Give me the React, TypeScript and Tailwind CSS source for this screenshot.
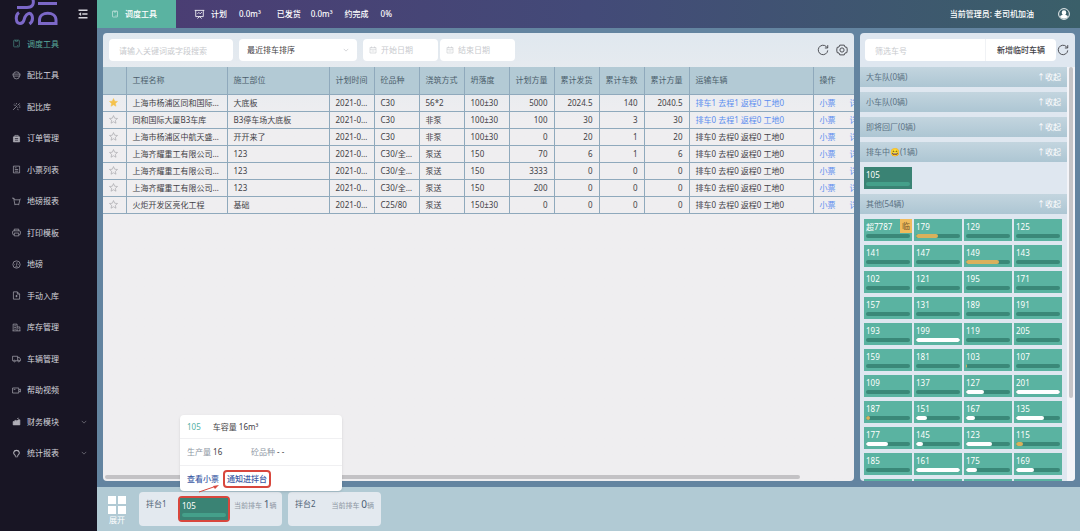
import type { ReactNode } from 'react';

const icon = {
  phone: (
    <>
      <rect x="3" y="2" width="10" height="12" rx="1" />
      <path d="M6 2v2h4V2M9 11.5h2" />
    </>
  ),
  mixer: (
    <>
      <path d="M3 5a5 3.500 0 0 1 10 0M1 5.500h14M2 9h12M3 9v1a5 4 0 0 0 10 0V9M2 5.500V9M14 5.500V9" />
    </>
  ),
  spark: (
    <>
      <path d="M7 9l-5 5M6 6l4 4M10 6l3.500-3.500M3 5l2 1M8 2v2M12 9h3M10 12l1 2.500M13 6l1.500-.5M5 3l1 1" />
    </>
  ),
  order: (
    <>
      <path fill="currentColor" d="M2.500 5h11v9h-11z" />
      <path d="M5 5V2.500h6V5" />
      <path stroke="#181524" d="M5 8h6M5 11h6" />
    </>
  ),
  list: (
    <>
      <path d="M2.500 2h11v12h-11zM5 5h3M5 8h6M5 11h6" />
    </>
  ),
  cart: (
    <>
      <path d="M0 2h3l2 3h9l-2 8H5L3 2M14 5l1-2M5 13v1.500M12 13v1.500" />
    </>
  ),
  printer: (
    <>
      <path d="M4 5V2h8v3M4 12H3a2 2 0 0 1-2-2V7a2 2 0 0 1 2-2h10a2 2 0 0 1 2 2v3a2 2 0 0 1-2 2h-1M4 9h8v5H4z" />
    </>
  ),
  gauge: (
    <>
      <circle cx="8" cy="8" r="6.500" />
      <path d="M9 4L8 10M4 8h1M11 8h1M6 12h4" />
    </>
  ),
  fileIn: (
    <>
      <path d="M2.500 1.500h7l4 4v9h-11zM9.500 1.500v4h4M8 7v4M6 9h4" />
    </>
  ),
  building: (
    <>
      <path d="M2 14V2h7v12M9 7h5v7M1 14h14M4 5h3M4 8h3M4 11h3M11 10h1" />
    </>
  ),
  truck: (
    <>
      <path d="M3 12H1V4h9v8H6M10 6h3l2 3v3h-1.500" />
      <circle cx="4.500" cy="12.500" r="1.500" />
      <circle cx="12" cy="12.500" r="1.500" />
    </>
  ),
  video: (
    <>
      <path d="M1 3.500h11v9H1zM12 7l3-1.500v5L12 9M3 6h3" />
    </>
  ),
  finance: (
    <>
      <path fill="currentColor" d="M2 8h3V6h3v2l3-3h3v9H2z" />
      <path d="M9 3l3-1" />
    </>
  ),
  bulb: (
    <>
      <path strokeWidth="2" d="M6 11.500C1 9 2.500 2.500 8 2.500S15 9 10 11.500" />
      <path d="M6 11v3h4v-3" />
    </>
  ),
};

const menu: { label: string; icon: ReactNode; active?: boolean; expandable?: boolean }[] = [
  { label: '调度工具', icon: icon.phone, active: true },
  { label: '配比工具', icon: icon.mixer },
  { label: '配比库', icon: icon.spark },
  { label: '订单管理', icon: icon.order },
  { label: '小票列表', icon: icon.list },
  { label: '地磅报表', icon: icon.cart },
  { label: '打印模板', icon: icon.printer },
  { label: '地磅', icon: icon.gauge },
  { label: '手动入库', icon: icon.fileIn },
  { label: '库存管理', icon: icon.building },
  { label: '车辆管理', icon: icon.truck },
  { label: '帮助视频', icon: icon.video },
  { label: '财务模块', icon: icon.finance, expandable: true },
  { label: '统计报表', icon: icon.bulb, expandable: true },
];

const columns = [
  { title: '', width: 'w-[23px]' },
  { title: '工程名称', width: 'w-[101px]' },
  { title: '施工部位', width: 'w-[102px]' },
  { title: '计划时间', width: 'w-[45px]' },
  { title: '砼品种', width: 'w-[45px]' },
  { title: '浇筑方式', width: 'w-[45px]' },
  { title: '坍落度', width: 'w-[45px]' },
  { title: '计划方量', width: 'w-[45px]', right: true },
  { title: '累计发货', width: 'w-[45px]', right: true },
  { title: '累计车数', width: 'w-[45px]', right: true },
  { title: '累计方量', width: 'w-[45px]', right: true },
  { title: '运输车辆', width: 'w-[124px]' },
  { title: '操作', width: 'w-auto' },
];

const rows = [
  ['上海市杨浦区同和国际…', '大底板', '2021-0…', 'C30', '56*2', '100±30', '5000', '2024.5', '140', '2040.5', '排车1 去程1 返程0 工地0'],
  ['同和国际大厦B3车库', 'B3停车场大底板', '2021-0…', 'C30', '非泵', '100±30', '100', '30', '3', '30', '排车0 去程1 返程0 工地0'],
  ['上海市杨浦区中航天盛…', '开开来了', '2021-0…', 'C30', '非泵', '100±30', '0', '20', '1', '20', '排车0 去程0 返程0 工地0'],
  ['上海齐耀重工有限公司…', '123', '2021-0…', 'C30/全…', '泵送', '150', '70', '6', '1', '6', '排车0 去程0 返程0 工地0'],
  ['上海齐耀重工有限公司…', '123', '2021-0…', 'C30/全…', '泵送', '150', '3333', '0', '0', '0', '排车0 去程0 返程0 工地0'],
  ['上海齐耀重工有限公司…', '123', '2021-0…', 'C30/全…', '泵送', '150', '200', '0', '0', '0', '排车0 去程0 返程0 工地0'],
  ['火炬开发区亮化工程', '基础', '2021-0…', 'C25/80', '泵送', '150±30', '0', '0', '0', '0', '排车0 去程0 返程0 工地0'],
];

type Truck = { no: string; load?: number; warn?: boolean; temp?: boolean };

const trucks: Truck[] = [
  { no: '超7787', temp: true }, { no: '179', load: 50, warn: true }, { no: '129' }, { no: '125' },
  { no: '141' }, { no: '147' }, { no: '149', load: 74, warn: true }, { no: '143' },
  { no: '102' }, { no: '121' }, { no: '195' }, { no: '171' },
  { no: '157' }, { no: '131' }, { no: '189' }, { no: '191' },
  { no: '193' }, { no: '199', load: 100 }, { no: '119' }, { no: '205' },
  { no: '159' }, { no: '181' }, { no: '103', load: 3, warn: true }, { no: '107' },
  { no: '109' }, { no: '137' }, { no: '127', load: 41 }, { no: '201', load: 100 },
  { no: '187', load: 10, warn: true }, { no: '151', load: 24 }, { no: '167', load: 20 }, { no: '135', load: 63 },
  { no: '177', load: 50 }, { no: '145', load: 15 }, { no: '123', load: 58 }, { no: '115', load: 17, warn: true },
  { no: '185' }, { no: '161', load: 100 }, { no: '175', load: 24 }, { no: '169', load: 41 },
  { no: '' }, { no: '' }, { no: '' }, { no: '' },
];

function Icon({ children, className }: { children: ReactNode; className: string }) {
  return (
    <svg className={className} viewBox="0 0 16 16" fill="none" stroke="currentColor" strokeWidth="1.2" aria-hidden="true">
      {children}
    </svg>
  );
}

function RefreshIcon() {
  return (
    <Icon className="size-3">
      <path d="M14.300 8.500A6.300 6.300 0 1 1 12.500 3.500L14 5M14.300 1.500V5.300H10.500" />
    </Icon>
  );
}

function TruckCard({ truck, dark }: { truck: Truck; dark?: boolean }) {
  return (
    <button
      className={`relative flex h-[22px] w-full flex-col justify-between overflow-hidden px-0.5 pt-0.5 pb-[3px] text-left text-white ${dark ? 'bg-[#3a8374]' : 'bg-[#5ab3a1]'}`}
    >
      <span className="leading-[11px]">{truck.no}</span>
      <span className={`block h-1 w-full overflow-hidden rounded-full ${dark ? 'bg-[#44a08a]' : 'bg-[#3a8878]'}`}>
        <span
          className={`block h-full rounded-full ${truck.warn ? 'bg-[#d9b15c]' : 'bg-white'}`}
          style={{ width: `${truck.load ?? 0}%` }}
        />
      </span>
      {truck.temp && <span className="absolute top-0 right-0 flex h-3.5 w-3 items-center justify-center bg-[#f0bb5c] text-[#7a5a2c]">临</span>}
    </button>
  );
}

function GroupHeader({ children }: { children: ReactNode }) {
  return (
    <div className="flex h-5 shrink-0 items-center justify-between bg-linear-to-b from-[#c3d5df] to-[#adc6d3] px-1.5 text-[#5a7183]">
      <h2>{children}</h2>
      <button className="text-white">↑收起</button>
    </div>
  );
}

function Sidebar() {
  return (
    <aside className="flex w-[97px] shrink-0 flex-col bg-[#181524] text-[#d5d5dc]">
      <div className="flex h-7 items-start justify-between pr-2 pl-3.5">
        <svg className="h-[26px] w-11" viewBox="0 0 44 26" fill="none" stroke="#7c68c8" strokeWidth="3" aria-hidden="true">
          <path d="M5 12.500C1 15 1.500 23.500 6 23.500S9.500 20 11 17s5-5.500 7-1.500c1 3 0 6.500-2.500 8.500M3 7.500h10c6 0 7-4 6-8" />
          <path d="M25.500 23.500h16.500v-3.500c0-9-16.500-9-16.500 0zM24 3.500h19" />
        </svg>
        <button className="mt-2" aria-label="折叠菜单">
          <Icon className="size-3">
            <path strokeWidth="2" d="M2 3h12M7 8h7M2 13h12" />
            <path fill="currentColor" strokeWidth="0" d="M5.500 5.500v5L2 8z" />
          </Icon>
        </button>
      </div>
      <nav className="mb-[62px] flex flex-1 flex-col">
        {menu.map((item) => (
          <a key={item.label} href="#" className={`flex flex-1 items-center pr-2.5 pl-3 ${item.active ? 'text-[#58ab9d]' : ''}`}>
            <Icon className="mr-1.5 size-[9px] opacity-80">{item.icon}</Icon>
            <span className="flex-1">{item.label}</span>
            {item.expandable && (
              <Icon className="size-1.5 opacity-50">
                <path strokeWidth="2" d="M2 5l6 6 6-6" />
              </Icon>
            )}
          </a>
        ))}
      </nav>
    </aside>
  );
}

function Header() {
  return (
    <header className="flex h-7 items-center bg-linear-to-r from-[#4b3b72] via-[#434a78] via-50% to-[#3a5f69] font-medium text-white">
      <button className="flex h-full w-[79px] items-center gap-1.5 bg-[#5ab3a1] pl-3.5">
        <Icon className="size-2 opacity-80">{icon.phone}</Icon>
        调度工具
      </button>
      <div className="flex items-center pl-[18px]">
        <Icon className="mr-1.5 size-[11px]">
          <path d="M1 2h14M2.500 2v9h11V2M5 7l2-2 2 2 2.500-2.500M5 14l3-3 3 3" />
        </Icon>
        <span className="mr-3">计划</span>
        <span className="mr-4">0.0m³</span>
        <span className="mr-2.5">已发货</span>
        <span className="mr-3">0.0m³</span>
        <span className="mr-3">约完成</span>
        <span>0%</span>
      </div>
      <span className="ml-auto">当前管理员: 老司机加油</span>
      <button className="mr-2.5 ml-6" aria-label="账户">
        <svg className="size-3" viewBox="0 0 16 16" aria-hidden="true">
          <circle cx="8" cy="8" r="7.200" fill="none" stroke="white" strokeWidth="1.200" />
          <path fill="white" d="M8 3a3 3 0 0 1 3 3c0 1.500-.6 2.400-1.300 3 2.300.6 3.500 1.500 3.500 3A7 7 0 0 1 8 14.300 7 7 0 0 1 2.800 12c0-1.500 1.200-2.400 3.500-3C5.600 8.400 5 7.500 5 6a3 3 0 0 1 3-3z" />
        </svg>
      </button>
    </header>
  );
}

function DateInput({ label }: { label: string }) {
  return (
    <label className="flex h-[22px] w-[75px] items-center gap-1 rounded-sm bg-white px-1.5 text-[#c8cace]">
      <Icon className="size-2 shrink-0">
        <path d="M2 3h12v11H2zM2 6.500h12M5 1v3M11 1v3M5 10h6" />
      </Icon>
      <input aria-label={label} placeholder={label} className="w-full min-w-0 outline-none placeholder:text-[#c8cace]" />
    </label>
  );
}

function Toolbar() {
  return (
    <div className="flex h-[34px] items-center px-1.5">
      <input
        aria-label="搜索"
        placeholder="请输入关键词或字段搜索"
        className="mr-1.5 h-[22px] w-[124px] rounded-sm bg-white px-2.5 outline-none placeholder:text-[#c8cace]"
      />
      <div className="relative mr-1.5 w-[118px]">
        <select aria-label="排序" className="h-[22px] w-full appearance-none rounded-sm bg-white px-2 outline-none">
          <option>最近排车排序</option>
        </select>
        <Icon className="pointer-events-none absolute top-2 right-2 size-1.5 text-[#c8cace]">
          <path strokeWidth="2" d="M2 5l6 6 6-6" />
        </Icon>
      </div>
      <div className="flex gap-0.5">
        <DateInput label="开始日期" />
        <DateInput label="结束日期" />
      </div>
      <button className="mr-[7px] ml-auto" aria-label="刷新">
        <RefreshIcon />
      </button>
      <button aria-label="设置">
        <Icon className="size-3">
          <path d="M5 1.500h6l1 2.500 2.500.5L15 8l-.5 3.500-2.500.5-1 2.500H5L4 12l-2.500-.5L1 8l.5-3.500L4 4z" />
          <circle cx="8" cy="8" r="2.800" />
        </Icon>
      </button>
    </div>
  );
}

function ProjectTable() {
  return (
    <table className="w-full min-w-[864px] table-fixed border-collapse text-left">
      <thead>
        <tr className="h-[27px] bg-[#b3cad5] text-[#4b5e6b]">
          {columns.map((col) => (
            <th
              key={col.title}
              className={`${col.width} border-r border-b border-[#8fa9bc] px-1.5 font-normal whitespace-nowrap ${col.right ? 'text-right' : ''}`}
            >
              {col.title}
            </th>
          ))}
        </tr>
      </thead>
      <tbody>
        {rows.map((row, i) => (
          <tr key={i} className="h-[17px]">
            <td className="border-r border-b border-[#8fa9bc] pl-1.5">
              <button className="block" aria-label="收藏">
                <svg
                  className={`size-[9px] ${i === 0 ? 'fill-[#f5c24c] text-[#f5c24c]' : 'fill-none text-[#9a9a9e]'}`}
                  viewBox="0 0 16 16"
                  stroke="currentColor"
                  aria-hidden="true"
                >
                  <path d="M8 1l2.100 4.700 5 .5-3.800 3.400 1.100 5L8 12l-4.400 2.600 1.100-5L.9 6.200l5-.5z" />
                </svg>
              </button>
            </td>
            {row.map((cell, j) => (
              <td
                key={j}
                className={`border-r border-b border-[#8fa9bc] px-1.5 whitespace-nowrap ${columns[j + 1].right ? 'text-right' : ''} ${j === 10 && i < 2 ? 'text-[#5b8def]' : ''}`}
              >
                {cell}
              </td>
            ))}
            <td className="border-b border-[#8fa9bc] px-1.5 whitespace-nowrap text-[#5b8def]">
              <a href="#" className="mr-3.5">小票</a>
              <a href="#">详</a>
            </td>
          </tr>
        ))}
      </tbody>
    </table>
  );
}

function TruckPanel() {
  return (
    <section className="flex w-[215px] shrink-0 flex-col overflow-hidden rounded-sm bg-[#dfe7f0]">
      <div className="flex h-[34px] shrink-0 items-center pr-1.5 pl-[5px]">
        <input
          aria-label="筛选车号"
          placeholder="筛选车号"
          className="h-[22px] min-w-0 flex-1 rounded-l-sm bg-white px-2.5 outline-none placeholder:text-[#c8cace]"
        />
        <button className="mr-px h-[22px] w-[71px] rounded-r-sm border-l border-[#f0f2f5] bg-white font-medium">新增临时车辆</button>
        <RefreshIcon />
      </div>
      <div className="flex min-h-0 flex-1">
        <div className="flex min-w-0 flex-1 flex-col gap-[5px] overflow-hidden">
          <GroupHeader>大车队(0辆)</GroupHeader>
          <GroupHeader>小车队(0辆)</GroupHeader>
          <GroupHeader>即将回厂(0辆)</GroupHeader>
          <GroupHeader>
            排车中😄(1辆)
          </GroupHeader>
          <div className="grid shrink-0 grid-cols-4 gap-0.5 pr-[5px] pl-1">
            <TruckCard truck={{ no: '105' }} dark />
          </div>
          <GroupHeader>其他(54辆)</GroupHeader>
          <div className="grid shrink-0 grid-cols-4 gap-x-0.5 gap-y-1 pr-[5px] pl-1">
            {trucks.map((truck, i) => (
              <TruckCard key={i} truck={truck} />
            ))}
          </div>
        </div>
        <div className="w-2 shrink-0 bg-[#f4f4f8] px-0.5">
          <div className="h-4/5 rounded-full bg-[#c5c5c8]" />
        </div>
      </div>
    </section>
  );
}

function TruckPopover() {
  return (
    <div className="absolute bottom-full left-0 z-10 mb-[7px] w-[162px] rounded-sm bg-white shadow-sm">
      <div className="flex h-6 items-center border-b border-[#f0f0f2] px-[7px]">
        <span className="mr-3 text-[#52b0a4]">105</span>
        <span>车容量 16m³</span>
      </div>
      <div className="flex h-[27px] items-center border-b border-[#f0f0f2] px-[7px]">
        <span className="w-16">
          <span className="text-[#8d96a3]">生产量</span> 16
        </span>
        <span>
          <span className="text-[#8d96a3]">砼品种</span> - -
        </span>
      </div>
      <div className="flex h-[25px] items-center gap-1 px-[7px] font-medium text-[#3d5ba5]">
        <button>查看小票</button>
        <button className="h-[18px] rounded-sm border-2 border-[#d8473d] px-0.5">通知进拌台</button>
      </div>
      <svg className="absolute top-[70px] left-[18px] h-2 w-[22px]" viewBox="0 0 22 8" aria-hidden="true">
        <path d="M1 7L17 1.500" stroke="#d8473d" />
        <path d="M21 0l-4 4-2-3z" fill="#d8473d" />
      </svg>
    </div>
  );
}

function Stations() {
  return (
    <footer className="flex h-11 items-center gap-1.5 bg-[#b1cad4] pl-2.5">
      <button className="mr-1.5 flex w-5 flex-col items-center pt-1 text-white">
        <svg className="size-[18px]" viewBox="0 0 18 18" fill="currentColor" aria-hidden="true">
          <path d="M0 0h8v8H0zM10 0h8v8h-8zM0 10h8v8H0zM10 10h8v8h-8z" />
        </svg>
        <span>展开</span>
      </button>
      <div className="flex h-[34px] w-[143px] items-start rounded-sm bg-[#e3e9ef] px-[7px] pt-1">
        <h2 className="mt-0.5 w-8 shrink-0 text-[#4d6073]">拌台1</h2>
        <div className="relative w-[52px] shrink-0 rounded-sm border-2 border-[#d8473d]">
          <TruckCard truck={{ no: '105' }} dark />
          <TruckPopover />
        </div>
        <p className="mt-0.5 ml-1 text-[7px] whitespace-nowrap text-[#8d96a3]">
          当前排车 <span className="text-[10px] text-[#4d6073]">1</span>辆
        </p>
      </div>
      <div className="flex h-[34px] w-[93px] items-start justify-between rounded-sm bg-[#e3e9ef] px-[7px] pt-1">
        <h2 className="mt-0.5 text-[#4d6073]">拌台2</h2>
        <p className="mt-0.5 text-[7px] whitespace-nowrap text-[#8d96a3]">
          当前排车 <span className="text-[10px] text-[#4d6073]">0</span>辆
        </p>
      </div>
    </footer>
  );
}

export default function App() {
  return (
    <div className="flex h-screen overflow-hidden font-['Noto_Sans','Noto_Sans_CJK_SC',sans-serif] text-[8px] leading-3 text-[#3f4146]">
      <Sidebar />
      <div className="flex min-w-0 flex-1 flex-col bg-[#6384a0]">
        <Header />
        <main className="flex min-h-0 flex-1 gap-1.5 pt-[5px] pr-[5px] pb-1.5 pl-1.5">
          <section className="flex min-w-0 flex-1 flex-col overflow-hidden rounded-sm bg-linear-to-b from-[#e0e8ef] to-[#efeef0] to-20%">
            <Toolbar />
            <div className="min-h-0 flex-1 overflow-hidden">
              <ProjectTable />
            </div>
            <div className="mx-0.5 mb-0.5 h-1">
              <div className="h-full w-[93%] rounded-full bg-[#c3c2c5]" />
            </div>
          </section>
          <TruckPanel />
        </main>
        <Stations />
      </div>
    </div>
  );
}
